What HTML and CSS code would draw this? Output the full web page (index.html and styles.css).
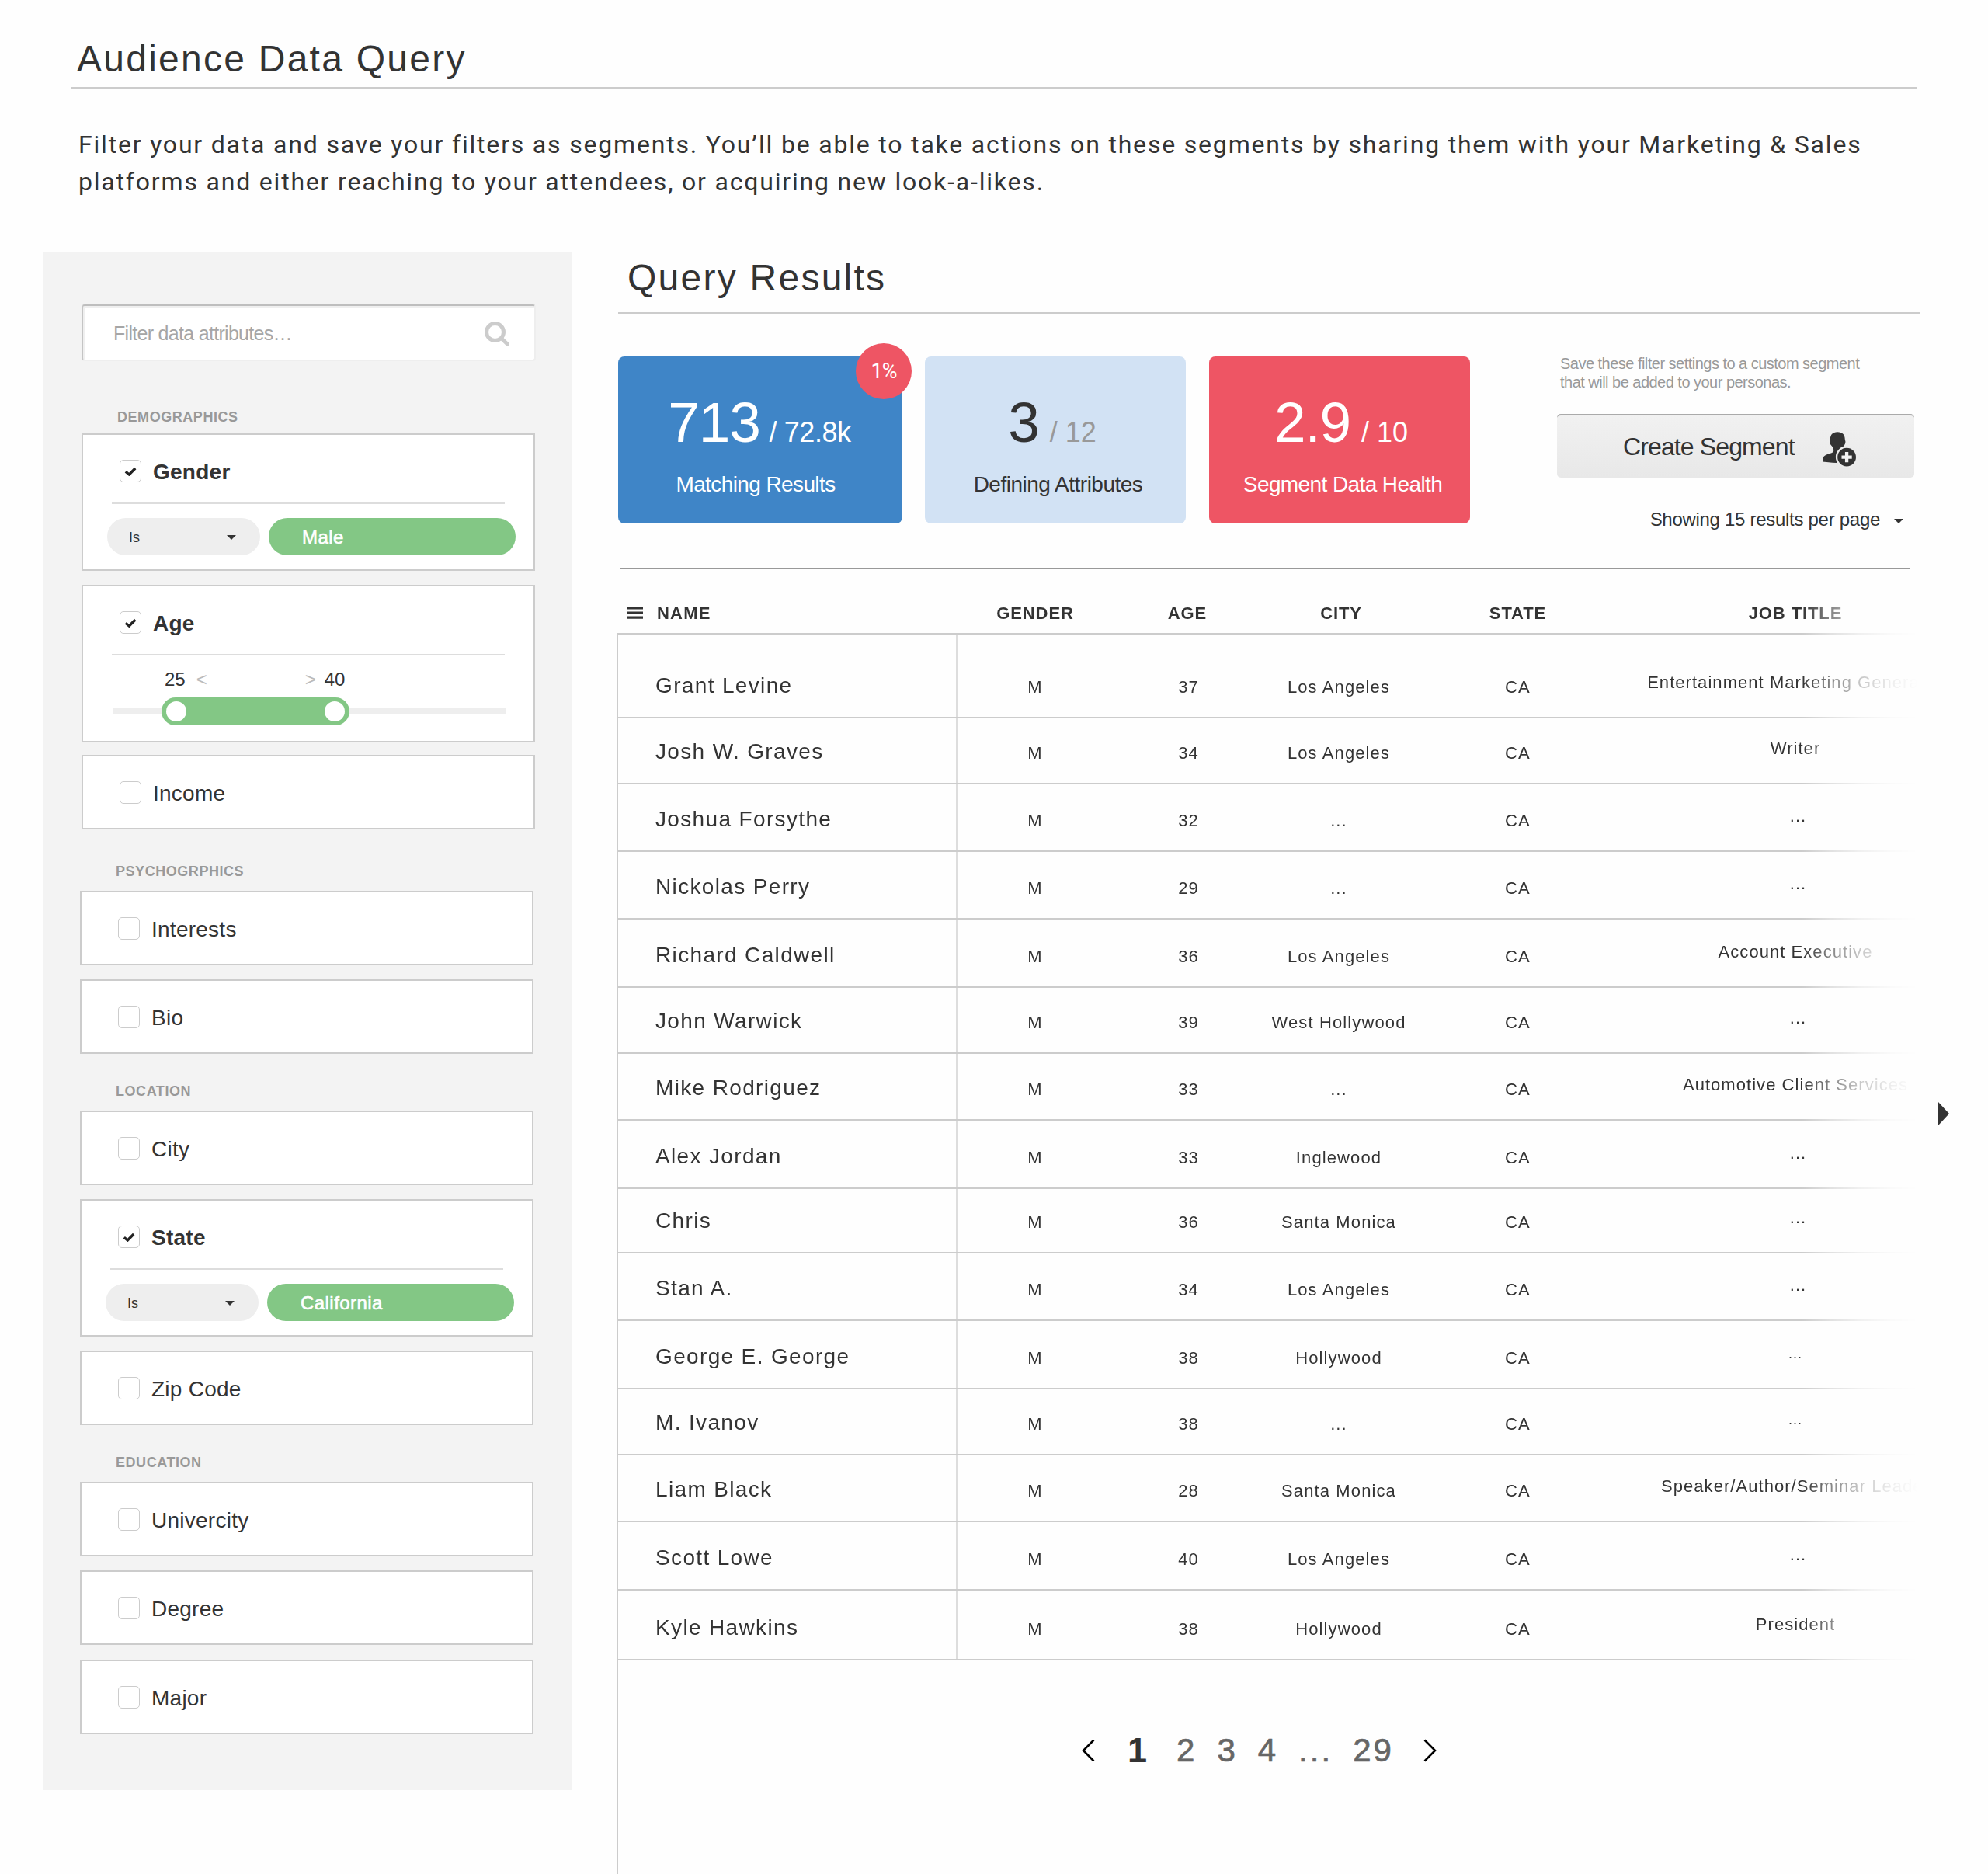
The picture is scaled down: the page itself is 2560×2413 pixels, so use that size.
FILE: index.html
```html
<!DOCTYPE html>
<html lang="en">
<head>
<meta charset="utf-8">
<title>Audience Data Query</title>
<link rel="stylesheet" href="styles.css">
</head>
<body>
<svg width="0" height="0" class="defs" aria-hidden="true">
  <symbol id="check" viewBox="0 0 16 12"><path d="M1.8 6.2 6.3 10 14.2 2" fill="none" stroke="#222" stroke-width="3.4"/></symbol>
  <symbol id="caret" viewBox="0 0 12 6"><path d="M0 0H12L6 6Z" fill="#333"/></symbol>
</svg>

<header class="page-header"><h1 class="heading">Audience Data Query</h1></header>
<p class="intro">Filter your data and save your filters as segments. You’ll be able to take actions on these segments by sharing them with your Marketing &amp; Sales<br>platforms and either reaching to your attendees, or acquiring new look-a-likes.</p>

<main class="layout">
  <aside class="sidebar">
    <div class="search">
      <span class="search-text">Filter data attributes…</span>
      <svg class="search-icon" viewBox="0 0 32 32" fill="none" stroke="#ccc" stroke-width="5"><circle cx="13.5" cy="13.5" r="11"/><path d="M22 22 29.3 29" stroke-linecap="round"/></svg>
    </div>

    <section class="group group-first">
      <h3 class="group-title">DEMOGRAPHICS</h3>
      <div class="card card-open">
        <div class="option"><span class="box"><svg class="check"><use href="#check"/></svg></span><b class="option-name">Gender</b></div>
        <div class="pills"><div class="pill pill-op"><span>Is</span><svg class="caret"><use href="#caret"/></svg></div><div class="pill pill-value">Male</div></div>
      </div>
      <div class="card card-age">
        <div class="option"><span class="box"><svg class="check"><use href="#check"/></svg></span><b class="option-name">Age</b></div>
        <div class="range-values"><span>25</span><span class="sign sign-min">&lt;</span><span class="sign sign-max">&gt;</span><span>40</span></div>
        <div class="slider"><div class="slider-range" style="margin-left:63px;width:242px"><i class="knob"></i><i class="knob"></i></div></div>
      </div>
      <div class="card card-income"><div class="option"><span class="box"></span><span class="option-name">Income</span></div></div>
    </section>

    <section class="group">
      <h3 class="group-title">PSYCHOGRPHICS</h3>
      <div class="card"><div class="option"><span class="box"></span><span class="option-name">Interests</span></div></div>
      <div class="card"><div class="option"><span class="box"></span><span class="option-name">Bio</span></div></div>
    </section>

    <section class="group">
      <h3 class="group-title">LOCATION</h3>
      <div class="card"><div class="option"><span class="box"></span><span class="option-name">City</span></div></div>
      <div class="card card-open">
        <div class="option"><span class="box"><svg class="check"><use href="#check"/></svg></span><b class="option-name">State</b></div>
        <div class="pills"><div class="pill pill-op"><span>Is</span><svg class="caret"><use href="#caret"/></svg></div><div class="pill pill-value">California</div></div>
      </div>
      <div class="card"><div class="option"><span class="box"></span><span class="option-name">Zip Code</span></div></div>
    </section>

    <section class="group">
      <h3 class="group-title">EDUCATION</h3>
      <div class="card"><div class="option"><span class="box"></span><span class="option-name">Univercity</span></div></div>
      <div class="card"><div class="option"><span class="box"></span><span class="option-name">Degree</span></div></div>
      <div class="card card-last"><div class="option"><span class="box"></span><span class="option-name">Major</span></div></div>
    </section>
  </aside>

  <section class="results">
    <header class="results-header"><h2 class="heading">Query Results</h2></header>

    <div class="summary">
      <div class="stat stat-matching">
        <span class="badge">1%</span>
        <div class="figure"><span class="big">713</span><span class="total tight">/ 72.8k</span></div>
        <div class="stat-label">Matching Results</div>
      </div>
      <div class="stat stat-attributes">
        <div class="figure"><span class="big">3</span><span class="total">/ 12</span></div>
        <div class="stat-label">Defining Attributes</div>
      </div>
      <div class="stat stat-health">
        <div class="figure"><span class="big">2.9</span><span class="total">/ 10</span></div>
        <div class="stat-label">Segment Data Health</div>
      </div>
      <div class="actions">
        <p class="hint">Save these filter settings to a custom segment<br>that will be added to your personas.</p>
        <div class="create"><span class="create-text">Create Segment</span>
          <svg class="user-add" viewBox="0 0 130 135"><path d="M58 0C39 0 30 11 30 28c0 4-2 6-2 10 0 12 8 15 12 23 4 9 5 15-2 19C26 86 1 88 1 106v6c0 4 3 5 7 5 20 2 40 4 62 4L90 60 76 66c2-10 13-14 13-28 0-4-2-6-2-10C87 11 77 0 58 0Z" fill="#333"/><circle cx="94" cy="98" r="39.5" fill="#333" stroke="#ececec" stroke-width="7"/><path d="M94 78v40M74 98h40" stroke="#f4f4f4" stroke-width="13"/></svg>
        </div>
        <div class="per-page"><span>Showing 15 results per page</span><svg class="caret"><use href="#caret"/></svg></div>
      </div>
    </div>

    <div class="table">
      <div class="row head"><div class="name"><svg class="menu" viewBox="0 0 20 16"><path d="M0 1.8h20M0 8h20M0 14.2h20" stroke="#333" stroke-width="3.2"/></svg>NAME</div><div>GENDER</div><div class="h-age">AGE</div><div class="h-city">CITY</div><div>STATE</div><div class="h-job">JOB TITLE</div></div>
      <div class="row h108"><div class="name">Grant Levine</div><div>M</div><div>37</div><div>Los Angeles</div><div>CA</div><div class="job">Entertainment Marketing Generalist</div></div>
      <div class="row h85"><div class="name">Josh W. Graves</div><div>M</div><div>34</div><div>Los Angeles</div><div>CA</div><div class="job">Writer</div></div>
      <div class="row h87"><div class="name">Joshua Forsythe</div><div>M</div><div>32</div><div>...</div><div>CA</div><div class="job dots">...</div></div>
      <div class="row h87"><div class="name">Nickolas Perry</div><div>M</div><div>29</div><div>...</div><div>CA</div><div class="job dots">...</div></div>
      <div class="row h88"><div class="name">Richard Caldwell</div><div>M</div><div>36</div><div>Los Angeles</div><div>CA</div><div class="job">Account Executive</div></div>
      <div class="row h85"><div class="name">John Warwick</div><div>M</div><div>39</div><div>West Hollywood</div><div>CA</div><div class="job dots">...</div></div>
      <div class="row h86"><div class="name">Mike Rodriguez</div><div>M</div><div>33</div><div>...</div><div>CA</div><div class="job">Automotive Client Services</div></div>
      <div class="row h88"><div class="name">Alex Jordan</div><div>M</div><div>33</div><div>Inglewood</div><div>CA</div><div class="job dots">...</div></div>
      <div class="row h83"><div class="name">Chris</div><div>M</div><div>36</div><div>Santa Monica</div><div>CA</div><div class="job dots">...</div></div>
      <div class="row h87"><div class="name">Stan A.</div><div>M</div><div>34</div><div>Los Angeles</div><div>CA</div><div class="job dots">...</div></div>
      <div class="row h88"><div class="name">George E. George</div><div>M</div><div>38</div><div>Hollywood</div><div>CA</div><div class="job dots-small">...</div></div>
      <div class="row h85"><div class="name">M. Ivanov</div><div>M</div><div>38</div><div>...</div><div>CA</div><div class="job dots-small">...</div></div>
      <div class="row h86"><div class="name">Liam Black</div><div>M</div><div>28</div><div>Santa Monica</div><div>CA</div><div class="job">Speaker/Author/Seminar Leader</div></div>
      <div class="row h88"><div class="name">Scott Lowe</div><div>M</div><div>40</div><div>Los Angeles</div><div>CA</div><div class="job dots">...</div></div>
      <div class="row h90"><div class="name">Kyle Hawkins</div><div>M</div><div>38</div><div>Hollywood</div><div>CA</div><div class="job">President</div></div>
    </div>

    <nav class="pager">
      <svg class="chevron prev" viewBox="0 0 17 30"><path d="M15.5 1.5 2 15 15.5 28.5"/></svg>
      <b class="current">1</b><span>2</span><span>3</span><span>4</span><span>...</span><span>29</span>
      <svg class="chevron next" viewBox="0 0 17 30"><path d="M1.5 1.5 15 15 1.5 28.5"/></svg>
    </nav>

    <svg class="scroll-right" viewBox="0 0 14 30"><path d="M0 0 14 15 0 30Z" fill="#333"/></svg>
  </section>
</main>
</body>
</html>
```
FILE: styles.css
```css
* { box-sizing: border-box; }
body {
  margin: 0;
  width: 2560px;
  height: 2413px;
  overflow: hidden;
  background: #fefefe;
  color: #333;
  font-family: "Liberation Sans", Arial, sans-serif;
}
h1, h2, h3, p { margin: 0; font-weight: normal; }
svg { display: block; flex: none; }
.defs { position: absolute; }

.heading { font-size: 48px; line-height: 60px; letter-spacing: 2.25px; }
.page-header {
  width: 2378px;
  margin-left: 91px;
  padding: 46px 0 6px 8px;
  border-bottom: 2px solid #ccc;
}
.intro {
  margin: 48px 0 0 101px;
  font: 32px/48px Roboto, sans-serif;
  letter-spacing: 1.81px;
  white-space: nowrap;
}

.layout { display: flex; align-items: flex-start; margin: 66px 0 0 55px; }

/* Sidebar */
.sidebar { flex: none; width: 681px; height: 1981px; padding: 68px 0 0 50px; background: #f3f3f3; }
.search {
  display: flex;
  align-items: center;
  justify-content: space-between;
  width: 585px;
  height: 73px;
  padding: 0 32px 0 39px;
  background: #fff;
  border: 2px solid #eee;
  border-top-color: #bebebe;
  border-left-color: #c4c4c4;
  border-radius: 4px;
  box-shadow: inset 2px 2px 0 #efefef;
}
.search-text { padding-top: 1px; font-size: 25px; letter-spacing: -.7px; color: #a6a6a6; }
.search-icon { width: 32px; height: 32px; margin-top: 2px; }

.group { width: 584px; margin: 37px 0 0 -2px; }
.group-first { margin: 61px 0 43px 0; }
.group-title { margin-bottom: 14px; padding-left: 46px; font: bold 18px/22px "Liberation Sans", Arial, sans-serif; letter-spacing: .55px; color: #999; }
.group-first .group-title { margin-bottom: 10px; }
.card { height: 96px; background: #fff; border: 2px solid #ccc; }
.card + .card { margin-top: 18px; }
.card-open { height: 177px; }
.card-age { height: 203px; }
.card + .card-income { margin-top: 16px; }
.card + .card-last { margin-top: 19px; }
.option { display: flex; align-items: center; gap: 15px; margin: 0 37px; padding: 32px 0 26px 10px; height: 87px; }
.card-open .option, .card-age .option { height: 89px; border-bottom: 2px solid #ddd; }
.box { display: flex; align-items: center; justify-content: center; width: 28px; height: 29px; border: 1px solid #ccc; border-radius: 5px; background: #fff; }
.check { width: 16px; height: 12px; }
.option-name { padding-top: 2px; font-size: 28px; line-height: 30px; letter-spacing: .25px; }
.pills { display: flex; gap: 11px; margin: 18px 0 0 31px; }
.pill { display: flex; align-items: center; height: 48px; padding-top: 2px; border-radius: 24px; }
.pill-op { justify-content: space-between; width: 197px; padding-left: 28px; padding-right: 31px; background: #eee; font-size: 18px; }
.pill-value { width: 318px; padding-left: 43px; background: #83c785; color: #fff; font-size: 24px; letter-spacing: .45px; -webkit-text-stroke: .6px #fff; }
.caret { width: 12px; height: 6px; }
.range-values { display: flex; margin: 16px 0 0 105px; font-size: 24px; line-height: 30px; }
.sign { color: #bbb; }
.sign-min { margin-left: 14px; }
.sign-max { margin: 0 11px 0 126px; }
.slider {
  display: flex;
  width: 506px;
  height: 36px;
  margin: 8px 0 0 38px;
  background: linear-gradient(#eee, #eee) 0 13px / 100% 8px no-repeat;
}
.slider-range { display: flex; align-items: center; justify-content: space-between; padding: 0 6px; border-radius: 18px; background: #83c785; }
.knob { width: 26px; height: 26px; border-radius: 50%; background: #fff; }

/* Results */
.results { position: relative; flex: none; margin-left: 58px; width: 1741px; }
.results-header { width: 1677px; margin-left: 2px; padding: 4px 0 14px 12px; border-bottom: 2px solid #ccc; }
.summary { display: flex; width: 1661px; margin-left: 4px; margin-top: 55px; padding-bottom: 57px; border-bottom: 2px solid #999; }
.stat { position: relative; flex: none; width: 336px; height: 215px; padding-top: 45px; border-radius: 8px; color: #fff; text-align: center; }
.stat-matching { width: 366px; margin-left: -2px; background: #3f85c7; }
.stat-attributes { margin-left: 29px; background: #d2e2f4; color: #333; }
.stat-health { margin-left: 30px; background: #ee5564; }
.figure { display: flex; justify-content: center; align-items: baseline; gap: 14px; height: 80px; line-height: 80px; }
.stat-matching .figure { gap: 12px; padding-right: 2px; }
.big { font-size: 73px; letter-spacing: -1.2px; }
.total { font-size: 36px; }
.tight { letter-spacing: -.43px; }
.stat-attributes .total { color: #999; }
.stat-attributes .figure { padding-right: 8px; }
.stat-health .figure { padding-left: 4px; }
.stat-label { margin-top: 23px; font-size: 28px; line-height: 34px; letter-spacing: -.6px; }
.stat-matching .stat-label { padding-right: 12px; }
.stat-attributes .stat-label { padding-left: 7px; letter-spacing: -.5px; }
.stat-health .stat-label { padding-left: 8px; }
.badge {
  position: absolute;
  top: -17px;
  right: -12px;
  width: 72px;
  height: 72px;
  border-radius: 50%;
  background: #ee5564;
  font: 27px/72px Roboto, sans-serif;
  letter-spacing: -1px;
}
.actions { flex: none; width: 460px; margin: -3px 0 -20px 112px; }
.hint { padding-left: 4px; font-size: 20px; line-height: 24px; letter-spacing: -.52px; color: #999; white-space: nowrap; }
.create {
  display: flex;
  align-items: center;
  height: 82px;
  margin-top: 29px;
  padding-left: 85px;
  border-top: 2px solid #aaa;
  border-radius: 5px;
  background: linear-gradient(#f1f1f1, #e8e8e8);
}
.create-text { width: 257px; font-size: 32px; letter-spacing: -.88px; }
.user-add { width: 43px; height: 45px; margin-top: 6px; overflow: visible; }
.per-page { display: flex; align-items: center; justify-content: flex-end; gap: 18px; margin-top: 39px; padding-right: 14px; font-size: 24px; line-height: 30px; letter-spacing: -.29px; }
.per-page .caret { margin-top: 4px; }

.table {
  margin-left: 2px;
  width: 1739px;
  -webkit-mask-image: linear-gradient(to right, #000 1524px, rgba(0,0,0,.62) 1559px, rgba(0,0,0,.27) 1599px, rgba(0,0,0,.08) 1640px, transparent 1674px);
  mask-image: linear-gradient(to right, #000 1524px, rgba(0,0,0,.62) 1559px, rgba(0,0,0,.27) 1599px, rgba(0,0,0,.08) 1640px, transparent 1674px);
}
.row {
  display: grid;
  grid-template-columns: 437px 200px 195px 192px 269px 446px;
  border-bottom: 2px solid #ccc;
  font-size: 22px;
  line-height: 30px;
  letter-spacing: 1.12px;
  text-align: center;
  white-space: nowrap;
}
.row > div { display: flex; align-items: flex-end; justify-content: center; padding-bottom: 23px; }
.row > .name { justify-content: flex-start; padding: 0 0 25px 48px; border-right: 2px solid #ddd; font-size: 28px; letter-spacing: 1.35px; }
.row > .job { padding-bottom: 29px; letter-spacing: 1.05px; }
.row > .dots { padding-left: 7px; }
.row > .dots-small { font-size: 18px; letter-spacing: 1px; }
.head { height: 84px; font-weight: bold; letter-spacing: .9px; }
.row.head > div { padding-bottom: 10px; }
.row.head > .name { padding-left: 12px; border: 0; font-size: 22px; letter-spacing: 1.2px; }
.menu { width: 20px; height: 16px; margin: 0 18px 8px 0; }
.row > .h-age { padding-right: 3px; }
.row > .h-city { padding-left: 6px; }
.h83 { height: 83px; }
.h85 { height: 85px; }
.h86 { height: 86px; }
.h87 { height: 87px; }
.h88 { height: 88px; }
.h90 { height: 90px; }
.h108 { height: 108px; }

.pager {
  display: flex;
  align-items: center;
  gap: 26px;
  height: 275px;
  padding: 0 0 43px 599px;
  font-size: 42px;
  line-height: 50px;
  letter-spacing: 3px;
  color: #666;
  -webkit-text-stroke: .7px #666;
}
.results::before { content: ""; position: absolute; left: 0; top: 491px; width: 2px; height: 1598px; background: #ccc; }
.current { margin-right: 9px; font-size: 45px; color: #333; -webkit-text-stroke: 0; }
.chevron { width: 17px; height: 30px; fill: none; stroke: #000; stroke-width: 2.6; }
.prev { margin-right: 16px; }
.next { margin-left: 12px; }
.scroll-right { position: absolute; left: 1702px; top: 1095px; width: 14px; height: 30px; }
```
